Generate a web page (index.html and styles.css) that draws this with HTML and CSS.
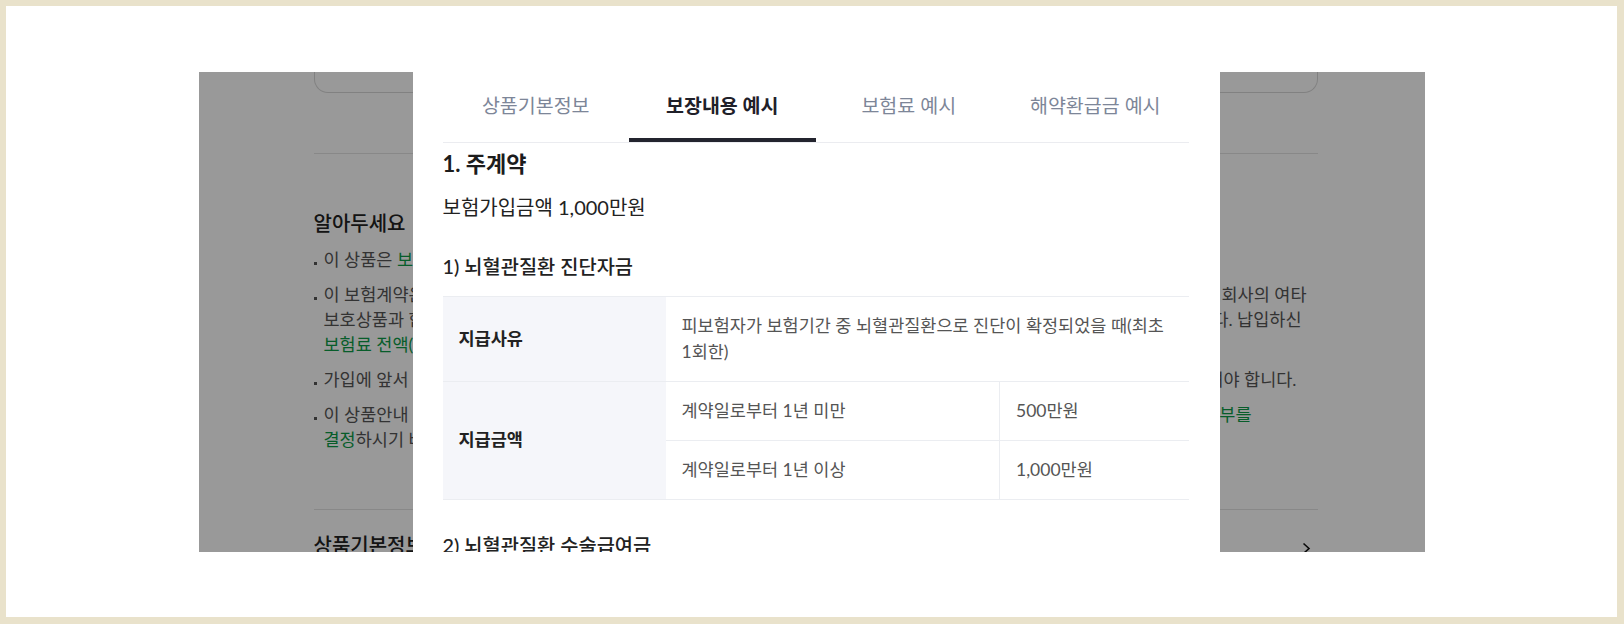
FILE: index.html
```html
<!DOCTYPE html>
<html lang="ko">
<head>
<meta charset="utf-8">
<title>보장내용 예시</title>
<link rel="stylesheet" href="styles.css">
</head>
<body>
<div class="frame">
  <div class="card">
    <div class="viewport">
      <div class="page">
        <div class="page-inner">
          <div class="box"></div>
          <div class="divider first"></div>
          <h3 class="notice-title">알아두세요</h3>
          <ul class="notice">
            <li><div class="ln"><span>이 상품은 <em>보장성 보험으로 저축 목적에는 적합하지 않습니다.</em></span></div></li>
            <li>
              <div class="ln"><span>이 보험계약은 예금자보호법에 따라 예금보험공사가</span><span class="tail t1">보험회사의 여타</span></div>
              <div class="ln"><span>보호상품과 합산하여 1인당 최고 5천만원이며</span><span class="tail t2">않습니다. 납입하신</span></div>
              <div class="ln"><span><em>보험료 전액(또는 일부)이 지급되지</em></span></div>
            </li>
            <li><div class="ln"><span>가입에 앞서 보험약관과 상품설명서를 반드시</span><span class="tail t3">확인하셔야 합니다.</span></div></li>
            <li>
              <div class="ln"><span>이 상품안내 자료는 요약 내용이므로 상품의</span><span class="tail t4"><em>일부 또는 전부를</em></span></div>
              <div class="ln"><span><em>결정</em>하시기 바랍니다.</span></div>
            </li>
          </ul>
          <div class="divider second"></div>
          <div class="row-link">
            <span>상품기본정보</span>
            <svg class="chev" width="9" height="13" viewBox="0 0 9 13"><path d="M1.5 1.5 L7 6.5 L1.5 11.5" fill="none" stroke="#111" stroke-width="1.6"/></svg>
          </div>
        </div>
      </div>
      <div class="dim"></div>
      <div class="modal">
        <div class="tabs">
          <div class="tab">상품기본정보</div>
          <div class="tab active">보장내용 예시</div>
          <div class="tab">보험료 예시</div>
          <div class="tab">해약환급금 예시</div>
        </div>
        <h2 class="section-title">1. 주계약</h2>
        <p class="amount">보험가입금액 1,000만원</p>
        <h4 class="sub-title">1) 뇌혈관질환 진단자금</h4>
        <table class="cover">
          <colgroup>
            <col class="c1"><col class="c2"><col class="c3">
          </colgroup>
          <tr>
            <th>지급사유</th>
            <td colspan="2">피보험자가 보험기간 중 뇌혈관질환으로 진단이 확정되었을 때(최초 1회한)</td>
          </tr>
          <tr>
            <th rowspan="2">지급금액</th>
            <td>계약일로부터 1년 미만</td>
            <td class="money">500만원</td>
          </tr>
          <tr>
            <td>계약일로부터 1년 이상</td>
            <td class="money">1,000만원</td>
          </tr>
        </table>
        <h4 class="sub-title next">2) 뇌혈관질환 수술급여금</h4>
      </div>
    </div>
  </div>
</div>
</body>
</html>
```
FILE: styles.css
```css
* { box-sizing: border-box; }
html, body { margin: 0; padding: 0; }
body {
  background: #e9e2cb;
  font-family: Lato, "Noto Sans CJK KR", sans-serif;
}
.frame {
  height: 624px;
  padding: 6px 7px 7px 6px;
}
.card {
  background: #fff;
  height: 611px;
  display: flex;
  align-items: center;
  justify-content: center;
}
.viewport {
  width: 1226px;
  height: 480px;
  position: relative;
  overflow: hidden;
}
.page {
  background: #fff;
  height: 100%;
}
.page-inner {
  width: 1004px;
  margin-left: 115px;
}
.box {
  height: 61px;
  margin-top: -40px;
  border: 1px solid #d8d8d8;
  border-top: none;
  border-radius: 0 0 14px 14px;
}
.divider { border-top: 1px solid #e3e3e3; }
.divider.first { margin-top: 60px; }
.divider.second { margin-top: 57px; }
.notice-title {
  margin: 56px 0 0;
  font-size: 20px;
  line-height: 26px;
  font-weight: 500;
  color: #222;
}
.notice {
  list-style: none;
  margin: 11px 0 0;
  padding: 0;
}
.notice li {
  position: relative;
  padding-left: 10px;
  font-size: 17.5px;
  line-height: 25px;
  color: #555;
}
.notice li + li { margin-top: 10px; }
.notice li::before {
  content: "";
  position: absolute;
  left: 0;
  top: 15px;
  width: 3px;
  height: 3px;
  background: #555;
}
.ln {
  display: flex;
  white-space: nowrap;
}
.tail { margin-left: auto; }
.t1 { margin-right: 11px; }
.t2 { margin-right: 16px; }
.t3 { margin-right: 21px; }
.t4 { margin-right: 66px; }
.notice em { font-style: normal; color: #0c9c47; }
.row-link {
  display: flex;
  justify-content: space-between;
  align-items: center;
  margin-top: 22px;
  height: 26px;
  padding-right: 7px;
  font-size: 20px;
  font-weight: 500;
  color: #222;
}
.chev { display: block; margin-top: 8px; }
.dim {
  position: absolute;
  inset: 0;
  background: rgba(0, 0, 0, 0.4);
}
.modal {
  position: absolute;
  top: 0;
  left: 214px;
  width: 807px;
  height: 480px;
  background: #fff;
  padding: 0 31px 0 30px;
}
.tabs {
  display: flex;
  border-bottom: 1px solid #ebecf0;
}
.tab {
  flex: 1;
  text-align: center;
  height: 70px;
  padding-top: 21px;
  font-size: 19.5px;
  line-height: 26px;
  color: #7d8698;
}
.tab.active {
  color: #1f2029;
  font-weight: 700;
  border-bottom: 4px solid #23242e;
}
.section-title {
  margin: 7px 0 0;
  font-size: 22px;
  line-height: 28px;
  font-weight: 700;
  color: #1c1c1c;
}
.amount {
  margin: 16px 0 0;
  font-size: 20px;
  line-height: 26px;
  color: #222;
}
.sub-title {
  margin: 33px 0 0;
  font-size: 19.8px;
  line-height: 26px;
  font-weight: 500;
  color: #222;
}
.sub-title.next { margin-top: 32px; }
.cover {
  margin-top: 17px;
  width: 746px;
  border-collapse: collapse;
  table-layout: fixed;
  border-bottom: 1px solid #ebedf1;
}
.c1 { width: 223px; }
.c2 { width: 334px; }
.c3 { width: 189px; }
.cover tr { border-top: 1px solid #ebedf1; }
.cover th {
  background: #f5f6fa;
  text-align: left;
  padding: 16px;
  font-size: 17.5px;
  line-height: 26px;
  font-weight: 700;
  color: #222;
}
.cover td {
  padding: 16px;
  font-size: 17.5px;
  line-height: 26px;
  color: #555;
}
.cover td.money { border-left: 1px solid #ebedf1; }
```
